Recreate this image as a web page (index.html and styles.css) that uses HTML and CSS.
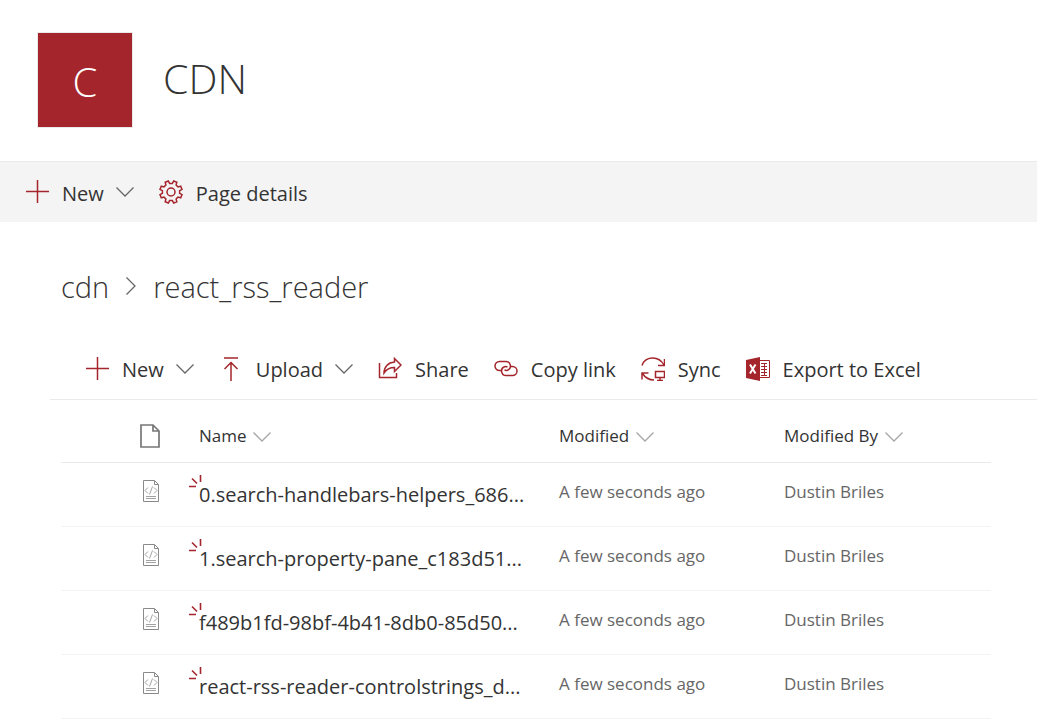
FILE: index.html
```html
<!DOCTYPE html>
<html lang="en">

<head>
    <meta charset="UTF-8">
    <meta name="viewport" content="width=device-width, initial-scale=1.0">
    <title>CDN</title>
    <link rel="stylesheet" href="styles.css">
</head>

<body>
    <!-- shared icons -->
    <svg class="sprite" aria-hidden="true">
        <symbol id="plus" viewBox="0 0 24 24">
            <path d="M1 11.500h23M12.500 0v23" />
        </symbol>
        <symbol id="chevron" viewBox="0 0 18 10">
            <path d="M.5 .5L9 9l8.500-8.500" />
        </symbol>
        <symbol id="code-file" viewBox="0 0 18 24">
            <path d="M1.500 1.500h11l4 4v17h-15zM12.500 1.500v4h4" />
            <path d="M6 8.500L3 11.500l3 3M12 8.500l3 3-3 3M10.500 7.500l-3 8M4 17.500h10M4 19.500h10" stroke-width=".8" />
        </symbol>
        <symbol id="glimmer" viewBox="0 0 13 14">
            <path d="M11.500 0v7M3 3.500l5 5M0 11.500h7" />
        </symbol>
    </svg>

    <header class="site-header">
        <a href="#" class="site-logo">C</a>
        <h1 class="site-title">CDN</h1>
    </header>

    <nav class="page-bar">
        <button type="button" class="command">
            <svg class="icon"><use href="#plus" /></svg>
            <span>New</span>
            <svg class="chevron"><use href="#chevron" /></svg>
        </button>
        <button type="button" class="command">
            <svg class="icon" viewBox="0 0 24 24">
                <path d="M13.400 3.400L14.700 1l3.100 1.300-.7 2.700L19 6.900l2.700-.7L23 9.300l-2.400 1.300v2.800l2.400 1.300-1.300 3.100-2.700-.7-1.900 1.900.7 2.700-3.100 1.300-1.300-2.400h-2.800L9.300 23l-3.100-1.300.7-2.700L5 17.100l-2.700.7L1 14.700l2.400-1.300v-2.800L1 9.300l1.300-3.100 2.700.7L6.900 5l-.7-2.700L9.300 1l1.300 2.400z" />
                <circle cx="12" cy="12" r="4" />
            </svg>
            <span>Page details</span>
        </button>
    </nav>

    <main class="library">
        <div class="breadcrumb">
            <a href="#">cdn</a>
            <svg class="crumb-arrow" viewBox="0 0 10 20">
                <path d="M.5 1.500L9 10 .5 18.500" />
            </svg>
            <span>react_rss_reader</span>
        </div>

        <div class="list-bar">
            <button type="button" class="command">
                <svg class="icon"><use href="#plus" /></svg>
                <span>New</span>
                <svg class="chevron"><use href="#chevron" /></svg>
            </button>
            <button type="button" class="command">
                <svg class="icon" viewBox="0 0 24 24">
                    <path d="M5 1h14M12 24V6M5.500 12L12 5.500l6.500 6.500" />
                </svg>
                <span>Upload</span>
                <svg class="chevron"><use href="#chevron" /></svg>
            </button>
            <button type="button" class="command">
                <svg class="icon" viewBox="0 0 24 24">
                    <path d="M1.500 6v14.500h17V16" />
                    <path d="M16.500 1.500L23 8l-6.500 6.500v-4c-5 0-8 1.500-10.500 5.500 0-6 4-10.500 10.500-11z" />
                </svg>
                <span>Share</span>
            </button>
            <button type="button" class="command">
                <svg class="icon" viewBox="0 0 24 24">
                    <path d="M7 13.500H5.500a4.500 4.500 0 0 1 0-9H12a4.500 4.500 0 0 1 1.500 8.700c-1 .3-2.200.2-3-.3" />
                    <path d="M17 9.500h1.500a4.500 4.500 0 0 1 0 9H12a4.500 4.500 0 0 1-1.500-8.700c1-.3 2.200-.2 3 .3" />
                </svg>
                <span>Copy link</span>
            </button>
            <button type="button" class="command">
                <svg class="icon" viewBox="0 0 24 24">
                    <path d="M1 8.500C4-1 17.500-2 23 8M23.500 2v6.500H17M13 23C8 23 4 20.500 1.500 16.500M1 22.500V16h6.500" />
                    <path d="M14.500 14.500h9v6h-9zM19 20.500v3M16 23.500h6" />
                </svg>
                <span>Sync</span>
            </button>
            <button type="button" class="command">
                <svg class="icon" viewBox="0 0 24 24">
                    <path class="book" d="M0 3L14 0v24L0 21z" />
                    <path d="M14 3.500h9.500v17H14M15 6.500h6M15 9.500h6M15 12.500h6M15 15.500h6M15 18.500h6M18.500 6v12" stroke-width="1" />
                    <path class="book-mark" d="M4 7.500l5.500 9M9.500 7.500l-5.500 9" />
                </svg>
                <span>Export to Excel</span>
            </button>
        </div>

        <table class="files">
            <thead>
                <tr>
                    <th class="col-type">
                        <svg class="file-icon" viewBox="0 0 20 24" role="img" aria-label="Type">
                            <path d="M1 1h12l6 6v16H1zM13 1v6h6" />
                        </svg>
                    </th>
                    <th class="col-name">Name <svg class="chevron"><use href="#chevron" /></svg></th>
                    <th class="col-modified">Modified <svg class="chevron"><use href="#chevron" /></svg></th>
                    <th>Modified By <svg class="chevron"><use href="#chevron" /></svg></th>
                </tr>
            </thead>
            <tbody>
                <tr>
                    <td class="col-type"><svg class="code-icon"><use href="#code-file" /></svg></td>
                    <td class="name"><svg class="glimmer"><use href="#glimmer" /></svg><a href="#">0.search-handlebars-helpers_686...</a></td>
                    <td>A few seconds ago</td>
                    <td>Dustin Briles</td>
                </tr>
                <tr>
                    <td class="col-type"><svg class="code-icon"><use href="#code-file" /></svg></td>
                    <td class="name"><svg class="glimmer"><use href="#glimmer" /></svg><a href="#">1.search-property-pane_c183d51...</a></td>
                    <td>A few seconds ago</td>
                    <td>Dustin Briles</td>
                </tr>
                <tr>
                    <td class="col-type"><svg class="code-icon"><use href="#code-file" /></svg></td>
                    <td class="name"><svg class="glimmer"><use href="#glimmer" /></svg><a href="#">f489b1fd-98bf-4b41-8db0-85d50...</a></td>
                    <td>A few seconds ago</td>
                    <td>Dustin Briles</td>
                </tr>
                <tr>
                    <td class="col-type"><svg class="code-icon"><use href="#code-file" /></svg></td>
                    <td class="name"><svg class="glimmer"><use href="#glimmer" /></svg><a href="#">react-rss-reader-controlstrings_d...</a></td>
                    <td>A few seconds ago</td>
                    <td>Dustin Briles</td>
                </tr>
            </tbody>
        </table>
    </main>
</body>

</html>
```
FILE: styles.css
```css
* {
    box-sizing: border-box;
    padding: 0;
    margin: 0;
}

body {
    background-color: #fff;
    color: #333;
    font-family: "Open Sans", "Noto Sans", sans-serif;
    font-size: 20px;
}

a {
    color: inherit;
    text-decoration: none;
}

svg {
    fill: none;
    flex-shrink: 0;
}

.sprite {
    display: none;
}

/* header */
.site-header {
    display: flex;
    align-items: center;
    gap: 30px;
    height: 161px;
    padding: 0 37px 2px;
}

.site-logo {
    width: 96px;
    height: 96px;
    padding-top: 2px;
    border: 1px solid #eaeaea;
    background-color: #a4262c;
    color: #fff;
    font-size: 40px;
    font-weight: 300;
    line-height: 94px;
    text-align: center;
}

.site-title {
    padding-bottom: 4px;
    font-size: 41px;
    font-weight: 300;
}

/* command bars */
.page-bar,
.list-bar {
    display: flex;
    align-items: center;
    gap: 25px;
}

.page-bar {
    height: 61px;
    padding: 0 25px;
    border-top: 1px solid #eaeaea;
    background-color: #f4f4f4;
}

.list-bar {
    height: 60px;
    padding: 0 35px 2px;
    border-bottom: 1px solid #eaeaea;
}

.command {
    display: flex;
    align-items: center;
    gap: 13px;
    border: 0;
    background: none;
    color: #333;
    font: inherit;
    line-height: 28px;
    white-space: nowrap;
    cursor: pointer;
}

.command span {
    padding-top: 3px;
}

.icon {
    width: 24px;
    height: 24px;
    stroke: #a4262c;
    stroke-width: 1.5;
}

.chevron {
    width: 18px;
    height: 10px;
    stroke: #666;
    stroke-width: 1.3;
}

.command .chevron {
    margin-left: -1px;
}

.book {
    fill: #a4262c;
    stroke: none;
}

.book-mark {
    stroke: #fff;
    stroke-width: 2;
}

/* document library */
.library {
    padding: 43px 0 0 50px;
}

.breadcrumb {
    display: flex;
    align-items: center;
    gap: 17px;
    height: 42px;
    margin-bottom: 33px;
    padding-left: 11px;
    font-size: 29px;
    font-weight: 300;
}

.crumb-arrow {
    width: 10px;
    height: 20px;
    stroke: #666;
    stroke-width: 1.3;
}

.files {
    width: calc(100% - 57px);
    margin: 10px 46px 0 11px;
    border-collapse: collapse;
    table-layout: fixed;
    font-size: 17px;
}

.files th {
    height: 52px;
    border-bottom: 1px solid #eaeaea;
    font-weight: 400;
    text-align: left;
    white-space: nowrap;
}

.files th .chevron {
    margin-left: 2px;
    stroke: #a6a6a6;
}

.files td {
    height: 64px;
    padding-bottom: 6px;
    border-bottom: 1px solid #f4f4f4;
    color: #666;
    white-space: nowrap;
}

.files .col-type {
    width: 138px;
    padding-right: 39px;
    text-align: right;
}

.files td.col-type {
    padding-bottom: 8px;
}

.col-name {
    width: 360px;
}

.col-modified {
    width: 225px;
}

.col-type svg {
    display: inline-block;
    vertical-align: middle;
}

.file-icon {
    width: 20px;
    height: 24px;
    stroke: #777;
    stroke-width: 1.7;
}

.code-icon {
    width: 18px;
    height: 24px;
    stroke: #8a8a8a;
}

.files .name {
    position: relative;
    padding-bottom: 0;
    color: #333;
    font-size: 20px;
}

/* mark for new files, lies over the start of the name */
.glimmer {
    position: absolute;
    top: 12px;
    left: -10px;
    width: 13px;
    height: 14px;
    stroke: #a4262c;
    stroke-width: 1.6;
}
```
